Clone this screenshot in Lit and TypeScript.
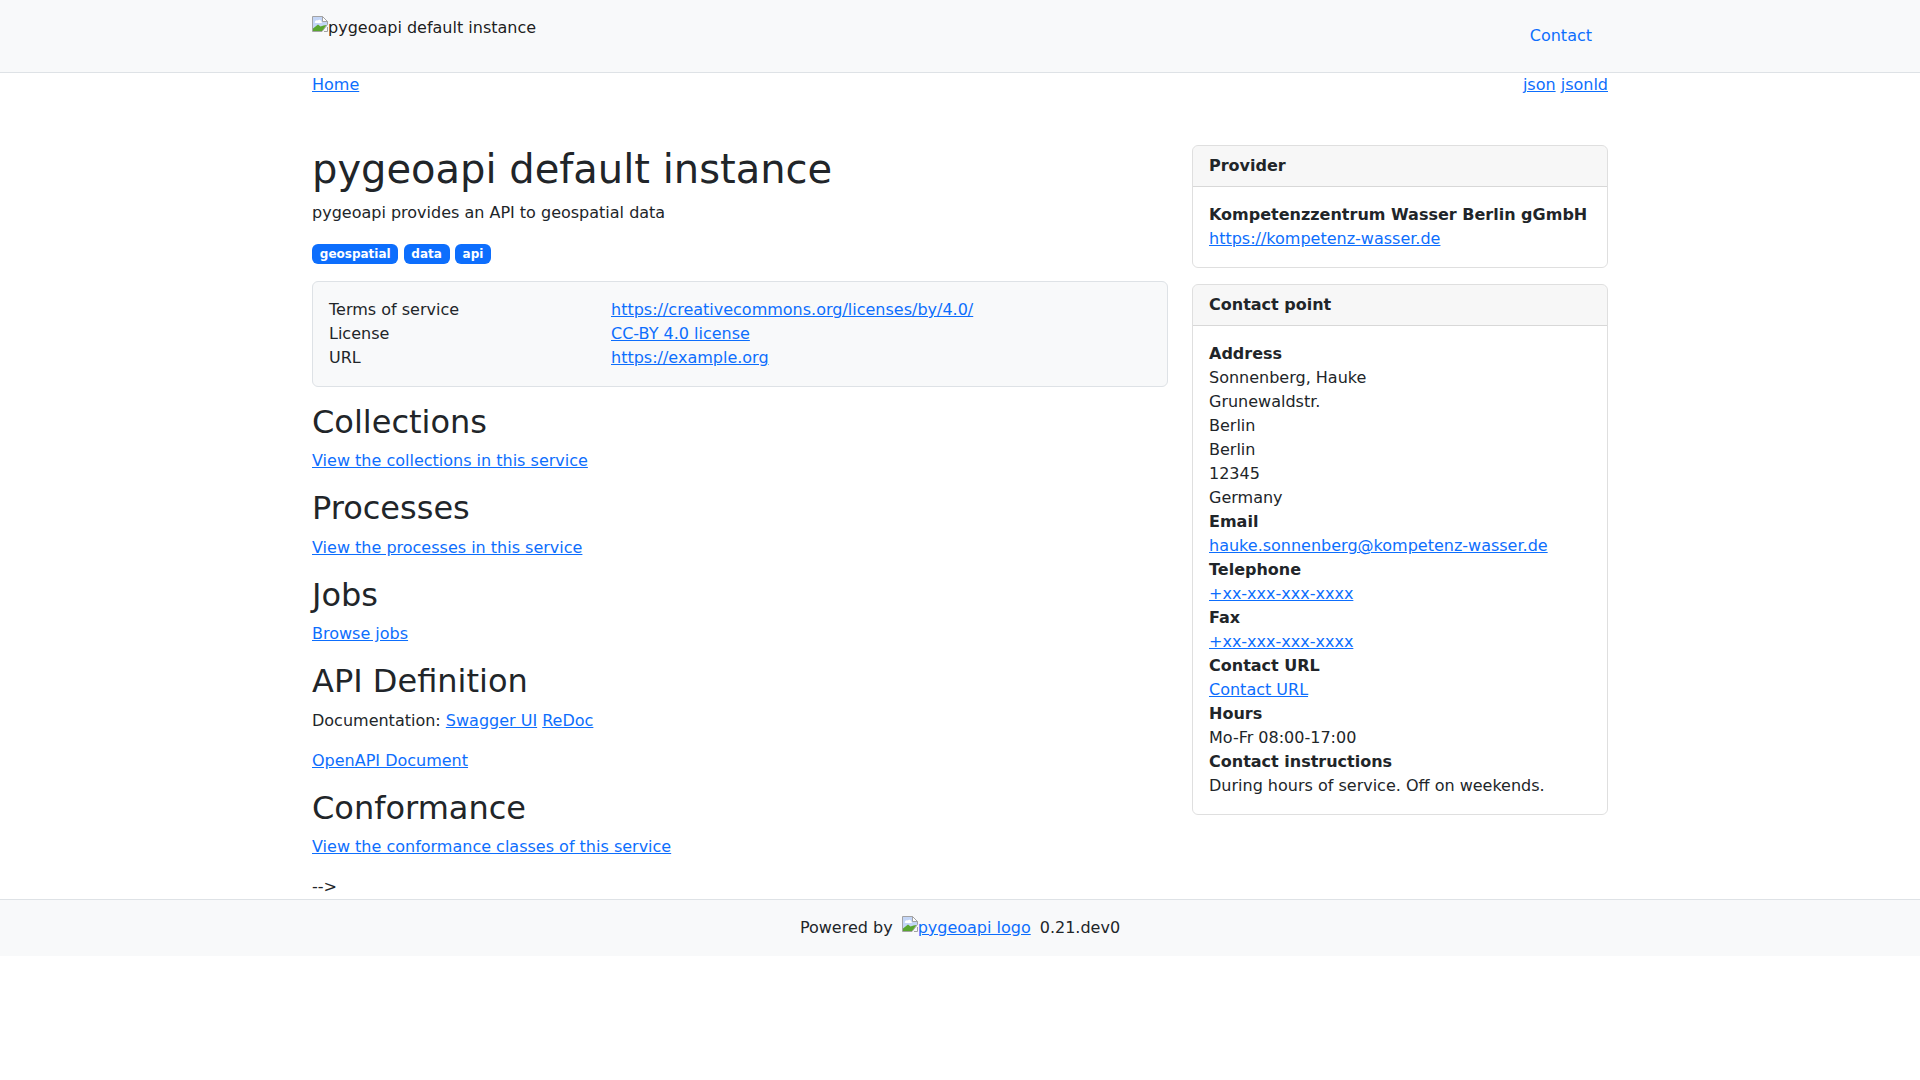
import { LitElement, html, css } from "lit";
import { customElement } from "lit/decorators.js";

const brokenImage = html`<svg class="broken" viewBox="0 0 16 16" width="16" height="16" aria-hidden="true">
  <path d="M0.5 0.5H10.5L15.5 5.5V8.5L10 15.5H0.5Z" fill="#c4d6f6" stroke="#a3a3a3" stroke-width="1"/>
  <path d="M10.5 0.5V5.5H15.5Z" fill="#fff" stroke="#a3a3a3" stroke-width="1"/>
  <path d="M3 6C3 4.6 4.6 3.8 5.8 4.6C6.8 3.2 9 3.8 9.2 5.6C10.2 5.7 10.2 7 9.2 7H3.5C2.6 7 2.4 6.1 3 6Z" fill="#fff"/>
  <path d="M1 15V12.5L6 8.5L8.5 10.5L11.5 9.5L14.5 9L10 15Z" fill="#5aa62f"/>
  <path d="M15.5 11V15.5H12" fill="none" stroke="#a3a3a3" stroke-width="1"/>
</svg>`;

@customElement("app-root")
export class AppRoot extends LitElement {
  static styles = css`
    :host {
      display: block;
      font-family: "DejaVu Sans", sans-serif;
      font-size: 16px;
      line-height: 24px;
      color: #212529;
      background: #fff;
    }
    * { box-sizing: border-box; }
    a { color: #0d6efd; text-decoration: underline; }
    .broken { flex: none; display: inline-block; vertical-align: top; }

    .navbar {
      height: 73px;
      background: #f8f9fa;
      border-bottom: 1px solid #dee2e6;
    }
    .wrap {
      width: 1320px;
      margin: 0 auto;
      padding: 0 12px;
    }
    .navbar .wrap {
      display: flex;
      justify-content: space-between;
      align-items: flex-start;
    }
    .brand {
      padding-top: 16px;
      color: rgba(0, 0, 0, 0.9);
      text-decoration: none;
      white-space: nowrap;
      display: flex;
      align-items: flex-start;
    }
    .nav-link {
      margin-top: 24px;
      margin-right: 16px;
      color: #0d6efd;
      text-decoration: none;
    }

    .crumbs {
      display: flex;
      justify-content: space-between;
    }

    .main {
      display: grid;
      grid-template-columns: 856px 416px;
      column-gap: 24px;
      margin-top: 48px;
    }
    h1, h2 { margin: 0 0 8px; font-weight: 500; line-height: 1.2; }
    h1 { font-size: 40px; }
    h2 { font-size: 32px; }
    p { margin: 0 0 16px; }

    .badge {
      display: inline-block;
      background: #0d6efd;
      color: #fff;
      font-size: 12px;
      font-weight: 700;
      line-height: 1;
      padding: 4.2px 7.8px;
      border-radius: 6px;
      vertical-align: baseline;
    }

    .box {
      background: #f8f9fa;
      border: 1px solid #dee2e6;
      border-radius: 6px;
      padding: 16px;
      margin-bottom: 16px;
      display: grid;
      grid-template-columns: 282px 1fr;
    }

    .card {
      border: 1px solid rgba(0, 0, 0, 0.125);
      border-radius: 6px;
      margin-bottom: 16px;
      overflow: hidden;
    }
    .card-header {
      padding: 8px 16px;
      font-weight: 700;
      background: rgba(0, 0, 0, 0.03);
      border-bottom: 1px solid rgba(0, 0, 0, 0.125);
    }
    .card-body { padding: 16px; }
    .card-body div { white-space: nowrap; }
    b { font-weight: 700; }

    .tail { height: 24px; }

    .footer {
      height: 57px;
      background: #f8f9fa;
      border-top: 1px solid #dee2e6;
      display: flex;
      justify-content: center;
      align-items: center;
      gap: 9px;
      white-space: nowrap;
    }
    .footer a { display: inline-flex; align-items: flex-start; }
  `;

  render() {
    return html`
      <nav class="navbar">
        <div class="wrap">
          <a class="brand" href="#">${brokenImage}<span>pygeoapi default instance</span></a>
          <a class="nav-link" href="#">Contact</a>
        </div>
      </nav>
      <div class="wrap">
        <div class="crumbs">
          <a href="#">Home</a>
          <div><a href="#">json</a> <a href="#">jsonld</a></div>
        </div>
        <div class="main">
          <section>
            <h1>pygeoapi default instance</h1>
            <p>pygeoapi provides an API to geospatial data</p>
            <p>
              <span class="badge">geospatial</span>
              <span class="badge">data</span>
              <span class="badge">api</span>
            </p>
            <div class="box">
              <div>Terms of service</div><div><a href="#">https://creativecommons.org/licenses/by/4.0/</a></div>
              <div>License</div><div><a href="#">CC-BY 4.0 license</a></div>
              <div>URL</div><div><a href="#">https://example.org</a></div>
            </div>
            <h2>Collections</h2>
            <p><a href="#">View the collections in this service</a></p>
            <h2>Processes</h2>
            <p><a href="#">View the processes in this service</a></p>
            <h2>Jobs</h2>
            <p><a href="#">Browse jobs</a></p>
            <h2>API Definition</h2>
            <p>Documentation: <a href="#">Swagger UI</a> <a href="#">ReDoc</a></p>
            <p><a href="#">OpenAPI Document</a></p>
            <h2>Conformance</h2>
            <p><a href="#">View the conformance classes of this service</a></p>
            <div class="tail">--&gt;</div>
          </section>
          <aside>
            <div class="card">
              <div class="card-header">Provider</div>
              <div class="card-body">
                <div><b>Kompetenzzentrum Wasser Berlin gGmbH</b></div>
                <div><a href="#">https://kompetenz-wasser.de</a></div>
              </div>
            </div>
            <div class="card">
              <div class="card-header">Contact point</div>
              <div class="card-body">
                <div><b>Address</b></div>
                <div>Sonnenberg, Hauke</div>
                <div>Grunewaldstr.</div>
                <div>Berlin</div>
                <div>Berlin</div>
                <div>12345</div>
                <div>Germany</div>
                <div><b>Email</b></div>
                <div><a href="#">hauke.sonnenberg@kompetenz-wasser.de</a></div>
                <div><b>Telephone</b></div>
                <div><a href="#">+xx-xxx-xxx-xxxx</a></div>
                <div><b>Fax</b></div>
                <div><a href="#">+xx-xxx-xxx-xxxx</a></div>
                <div><b>Contact URL</b></div>
                <div><a href="#">Contact URL</a></div>
                <div><b>Hours</b></div>
                <div>Mo-Fr 08:00-17:00</div>
                <div><b>Contact instructions</b></div>
                <div>During hours of service. Off on weekends.</div>
              </div>
            </div>
          </aside>
        </div>
      </div>
      <footer class="footer">
        <span>Powered by</span>
        <a href="#">${brokenImage}<span>pygeoapi logo</span></a>
        <span>0.21.dev0</span>
      </footer>
    `;
  }
}
